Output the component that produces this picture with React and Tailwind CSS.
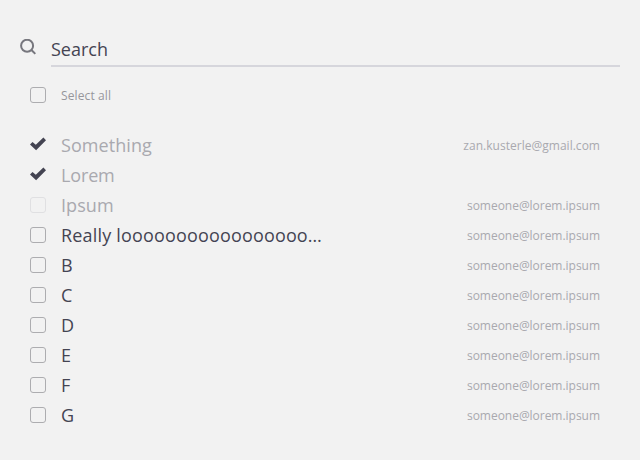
const people = [
  { name: 'Something', email: 'zan.kusterle@gmail.com', state: 'checked', spacing: 'tracking-[0.06px]', emailSpacing: 'tracking-[0.02px]' },
  { name: 'Lorem', email: '', state: 'checked', spacing: 'tracking-[-0.15px]' },
  { name: 'Ipsum', email: 'someone@lorem.ipsum', state: 'disabled', spacing: 'tracking-[0.08px]' },
  { name: 'Really looooooooooooooooo…', email: 'someone@lorem.ipsum', state: 'open', spacing: 'tracking-[0.17px]' },
  { name: 'B', email: 'someone@lorem.ipsum', state: 'open' },
  { name: 'C', email: 'someone@lorem.ipsum', state: 'open' },
  { name: 'D', email: 'someone@lorem.ipsum', state: 'open' },
  { name: 'E', email: 'someone@lorem.ipsum', state: 'open' },
  { name: 'F', email: 'someone@lorem.ipsum', state: 'open' },
  { name: 'G', email: 'someone@lorem.ipsum', state: 'open' },
];

function Box({ state }) {
  if (state === 'checked') {
    return (
      <svg className="h-4 w-4 shrink-0" viewBox="0 0 16 16" fill="#444452">
        <path d="M0 7.4 L2.5 4.9 L5.8 7.8 L13.4 0.5 L16 3.2 L6.1 13.3 Z" />
      </svg>
    );
  }
  return (
    <span
      className={
        'h-4 w-4 shrink-0 rounded-[3px] border ' +
        (state === 'disabled' ? 'border-[#e0e0e2]' : 'border-[#adadb0]')
      }
    />
  );
}

export default function App() {
  return (
    <div className="h-[460px] w-[640px] bg-[#f2f2f2] pt-[34px] font-['Open_Sans',sans-serif] text-[#444452]">
      <div className="flex h-[33px] px-5">
        <svg className="mt-[5px] h-4 w-4 shrink-0" viewBox="0 0 16 16" fill="none" stroke="#77777e" strokeWidth="2">
          <circle cx="7.1" cy="6.7" r="6" />
          <path d="M11.2 10.8 L15.3 14.9" />
        </svg>
        <div className="ml-[15px] flex-1 border-b-2 border-[#d6d6dc] text-lg leading-[30px]">Search</div>
      </div>
      <div className="mt-[13px] flex h-[30px] items-center pl-[30px]">
        <Box state="open" />
        <span className="ml-[15px] pt-0.5 text-xs tracking-[0.12px] text-[#96969c]">Select all</span>
      </div>
      <ul className="mt-5">
        {people.map((p) => (
          <li key={p.name} className="flex h-[30px] items-center pr-10 pl-[30px]">
            <Box state={p.state} />
            <span className={`ml-[15px] text-lg leading-[30px] whitespace-nowrap ${p.spacing || ''} ${p.state === 'open' ? '' : 'text-[#a9a9af]'}`}>
              {p.name}
            </span>
            <span className={`ml-auto pt-0.5 text-xs text-[#a9a9af] ${p.emailSpacing || 'tracking-[-0.03px]'}`}>{p.email}</span>
          </li>
        ))}
      </ul>
    </div>
  );
}
